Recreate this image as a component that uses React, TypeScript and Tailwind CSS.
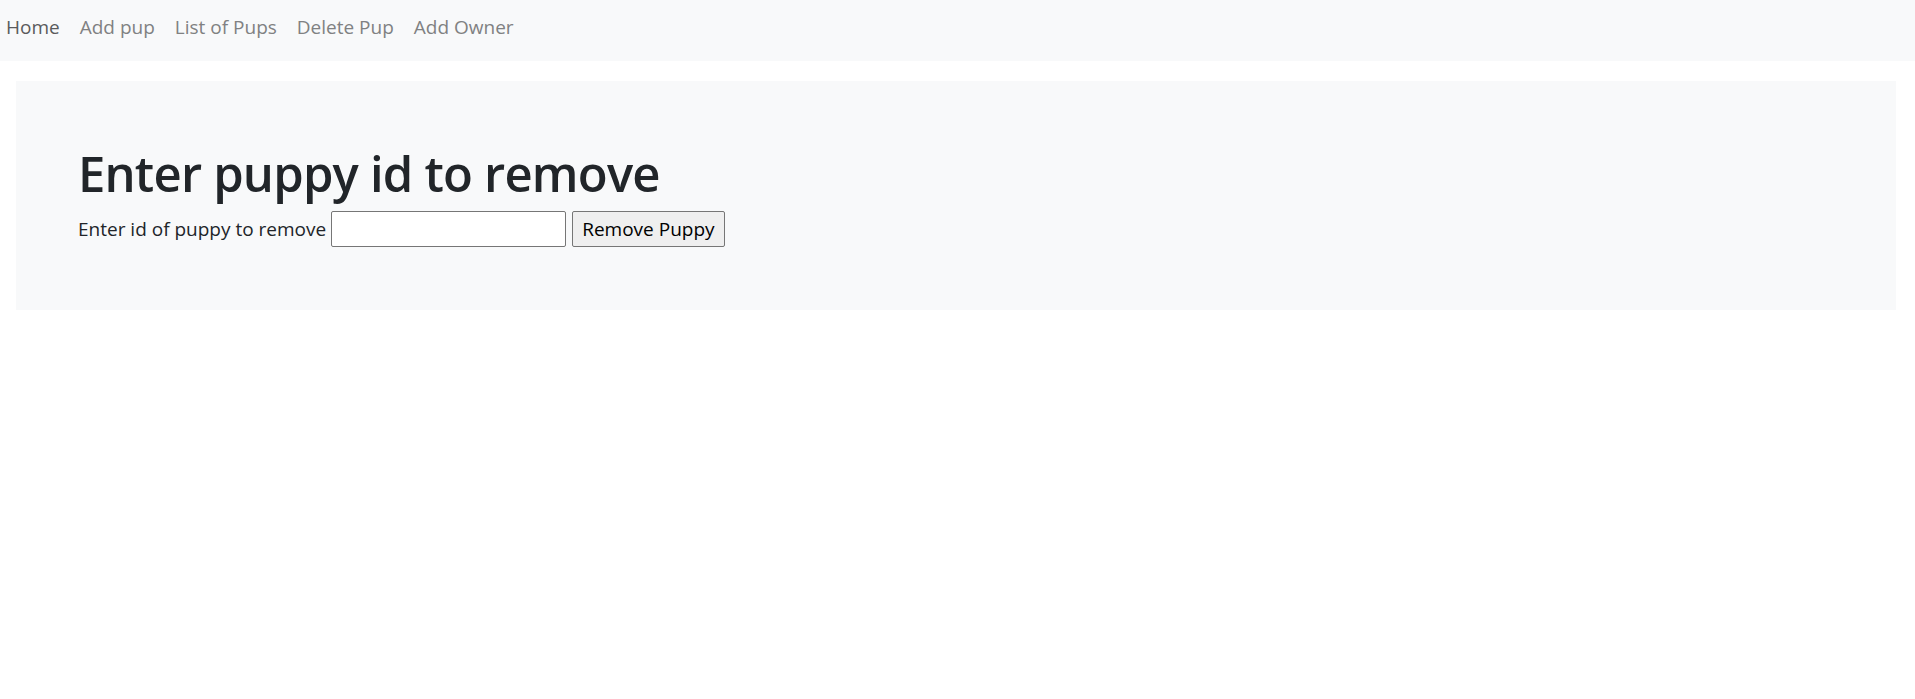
import { useState } from 'react'

const links = ['Home', 'Add pup', 'List of Pups', 'Delete Pup', 'Add Owner']

export default function App() {
  const [puppyId, setPuppyId] = useState('')

  return (
    <div className="min-h-screen bg-white font-['Open_Sans',sans-serif] text-[#212529]">
      <nav className="flex h-[61px] items-center bg-[#f8f9fa] pb-[7px]">
        {links.map((link, i) => (
          <a
            key={link}
            href="#"
            className={`pr-[10px] text-[19px] leading-[30px] ${i === 0 ? 'pl-[6px] text-[#5a5b5c]' : 'pl-[10px] text-[#808182]'}`}
          >
            {link}
          </a>
        ))}
      </nav>

      <div className="mt-5 ml-4 mr-[19px] bg-[#f8f9fa] px-[62px] pt-[60px] pb-[61px]">
        <h1 className="mb-[4px] text-[49px] font-semibold leading-[64px] tracking-[-0.8px]">
          Enter puppy id to remove
        </h1>
        <div className="flex h-[40px] items-center text-[19px]">
          <label htmlFor="pup">Enter id of puppy to remove</label>
          <input
            id="pup"
            value={puppyId}
            onChange={(e) => setPuppyId(e.target.value)}
            className="ml-[5px] h-[36px] w-[235px] rounded-[2px] border border-[#767676] bg-white px-1 outline-none"
          />
          <button className="ml-[6px] h-[36px] rounded-[2px] border border-[#767676] bg-[#efefef] px-[9px] text-[19px] text-black">
            Remove Puppy
          </button>
        </div>
      </div>
    </div>
  )
}
